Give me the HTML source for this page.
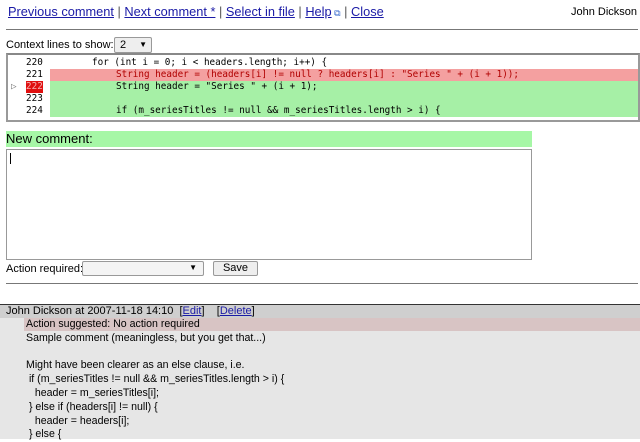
<html><head><style>
body{margin:0;width:640px;height:439px;overflow:hidden;background:#fff;font-family:"Liberation Sans",sans-serif;font-size:11px;color:#000;position:relative}
.a{position:absolute}
a{color:#1a1aa6;text-decoration:underline}
.code{font-family:"DejaVu Sans Mono","Liberation Mono",monospace;font-size:9.3px;white-space:pre}
.row{position:absolute;left:0;right:0;height:12px;line-height:12px}
</style></head><body>
<div class="a" style="left:8px;top:4px;font-size:12.8px;color:#555">
<a>Previous comment</a> | <a>Next comment *</a> | <a>Select in file</a> | <a>Help</a><span style="color:#36c;font-size:9px"> &#x29C9;</span> | <a>Close</a></div>
<div class="a" style="left:571px;top:6px;font-size:11px">John Dickson</div>
<div class="a" style="left:6px;top:29px;width:632px;height:1px;background:#777"></div>
<div class="a" style="left:6px;top:39px">Context lines to show:</div>
<div class="a" style="left:114px;top:37px;width:36px;height:14px;border:1px solid #999;background:#eee;border-radius:2px;font-size:11px;line-height:14px"><span style="padding-left:5px">2</span><span style="position:absolute;right:4px;top:0;font-size:8px">&#9660;</span></div>
<div class="a" style="left:6px;top:53px;width:630px;height:65px;border:2px solid #999;border-top-color:#888;background:#fff">
<div class="row code" style="top:2px"><span style="position:absolute;left:18px">220</span><span style="position:absolute;left:84px">for (int i = 0; i &lt; headers.length; i++) {</span></div>
<div class="row code" style="top:14px;left:42px;background:#f4a0a0;color:#b00000"><span style="position:absolute;left:-24px;color:#000">221</span><span style="position:absolute;left:66px">String header = (headers[i] != null ? headers[i] : "Series " + (i + 1));</span></div>
<div class="row code" style="top:26px;left:42px;background:#a6f0a6"><span style="position:absolute;left:-24px;background:#e01010;color:#f4b0b0;">222</span><span style="position:absolute;left:-39px;top:0;color:#777">&#9655;</span><span style="position:absolute;left:66px">String header = "Series " + (i + 1);</span></div>
<div class="row code" style="top:38px;left:42px;background:#a6f0a6"><span style="position:absolute;left:-24px">223</span></div>
<div class="row code" style="top:50px;left:42px;background:#a6f0a6"><span style="position:absolute;left:-24px">224</span><span style="position:absolute;left:66px">if (m_seriesTitles != null &amp;&amp; m_seriesTitles.length &gt; i) {</span></div>
</div>
<div class="a" style="left:6px;top:131px;width:526px;height:16px;background:#a6f7a6;font-size:13px;line-height:16px">New comment:</div>
<div class="a" style="left:6px;top:149px;width:524px;height:109px;border:1px solid #999;background:#fff"><div style="margin:3px 0 0 3px;width:1px;height:11px;background:#000"></div></div>
<div class="a" style="left:6px;top:263px">Action required:</div>
<div class="a" style="left:82px;top:261px;width:120px;height:13px;border:1px solid #999;background:#f4f4f4;border-radius:2px"><span style="position:absolute;right:6px;top:1px;font-size:8px">&#9660;</span></div>
<div class="a" style="left:213px;top:261px;width:43px;height:13px;border:1px solid #999;background:#eee;border-radius:2px;text-align:center;line-height:13px">Save</div>
<div class="a" style="left:6px;top:283px;width:632px;height:1px;background:#777"></div>
<div class="a" style="left:0;top:304px;width:640px;height:135px;background:#e6e6e6"></div>
<div class="a" style="left:0;top:304px;width:640px;height:1px;background:#333"></div>
<div class="a" style="left:0;top:305px;width:640px;height:13px;background:#cfcfcf"></div>
<div class="a" style="left:6px;top:305px">John Dickson at 2007-11-18 14:10 &nbsp;[<a>Edit</a>] &nbsp;&nbsp; [<a>Delete</a>]</div>
<div class="a" style="left:24px;top:318px;width:616px;height:13px;background:#d8c4c4"></div>
<div class="a" style="left:26px;top:318px;line-height:13.8px;font-size:10.6px">Action suggested: No action required<br>Sample comment (meaningless, but you get that...)<br><br>Might have been clearer as an else clause, i.e.<br>&nbsp;if (m_seriesTitles != null &amp;&amp; m_seriesTitles.length &gt; i) {<br>&nbsp;&nbsp;&nbsp;header = m_seriesTitles[i];<br>&nbsp;} else if (headers[i] != null) {<br>&nbsp;&nbsp;&nbsp;header = headers[i];<br>&nbsp;} else {</div>
</body></html>
